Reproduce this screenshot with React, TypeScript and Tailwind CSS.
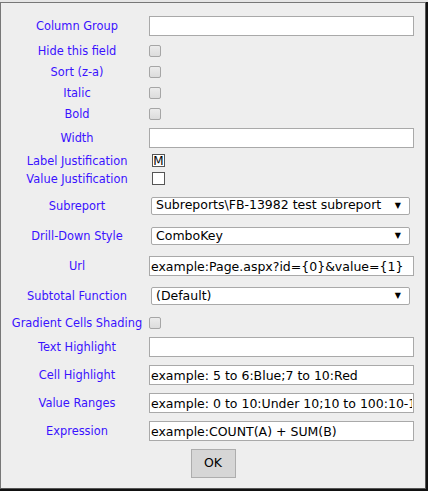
import React from "react";

const FONT = { fontFamily: '"DejaVu Sans", Verdana, sans-serif' };

function Label({ children }: { children: React.ReactNode }) {
  return (
    <div className="w-[144px] shrink-0 pt-[2px] text-center text-[11.4px] leading-none text-[#3a12ff] whitespace-nowrap">
      {children}
    </div>
  );
}

function TextBox({ value = "" }: { value?: string }) {
  return (
    <input
      readOnly
      defaultValue={value}
      className="w-[265px] h-[20px] border border-[#a9a9a9] bg-white px-[1px] text-[12.5px] text-black outline-none"
      style={FONT}
    />
  );
}

function DimBox() {
  return (
    <span className="block w-[12px] h-[12px] rounded-[2px] border border-[#a6a6a6] bg-gradient-to-b from-[#ececec] to-[#dcdcdc]" />
  );
}

function DropDown({ value }: { value: string }) {
  return (
    <div className="ml-[2px] w-[259px] h-[18px] flex items-center justify-between border border-[#a9a9a9] rounded-[2px] bg-white pl-[4px] pr-[8px]">
      <span className="text-[12.5px] text-black whitespace-nowrap">{value}</span>
      <span className="text-[8px] text-black">▼</span>
    </div>
  );
}

export default function App() {
  return (
    <div className="w-[428px] h-[491px] bg-[#111111]" style={FONT}>
      <div className="h-[2px] bg-[#e6e6e6]" />
      <div className="w-[426px] h-[487px] bg-[#eeeeee] border-t border-l border-[#777777] border-r border-r-[#555555] border-b border-b-[#555555] pl-[4px]">
        {/* Column Group */}
        <div className="mt-[13px] h-[20px] flex items-center">
          <Label>Column Group</Label>
          <TextBox />
        </div>
        {/* Boolean flags */}
        <div className="mt-[8px] h-[13px] flex items-center">
          <Label>Hide this field</Label>
          <DimBox />
        </div>
        <div className="mt-[8px] h-[13px] flex items-center">
          <Label>Sort (z-a)</Label>
          <DimBox />
        </div>
        <div className="mt-[8px] h-[13px] flex items-center">
          <Label>Italic</Label>
          <DimBox />
        </div>
        <div className="mt-[8px] h-[13px] flex items-center">
          <Label>Bold</Label>
          <DimBox />
        </div>
        <div className="mt-[8px] h-[20px] flex items-center">
          <Label>Width</Label>
          <TextBox />
        </div>
        {/* Justification */}
        <div className="mt-[6px] h-[13px] flex items-center">
          <Label>Label Justification</Label>
          <span className="ml-[3px] w-[13px] h-[13px] flex items-center justify-center border border-[#555555] bg-white text-[12px] leading-none text-black">
            M
          </span>
        </div>
        <div className="mt-[5px] h-[13px] flex items-center">
          <Label>Value Justification</Label>
          <span className="ml-[3px] w-[13px] h-[13px] border border-[#555555] bg-white" />
        </div>
        {/* Selects */}
        <div className="mt-[12px] h-[17px] flex items-center">
          <Label>Subreport</Label>
          <DropDown value="Subreports\FB-13982 test subreport" />
        </div>
        <div className="mt-[13px] h-[18px] flex items-center">
          <Label>Drill-Down Style</Label>
          <DropDown value="ComboKey" />
        </div>
        <div className="mt-[11px] h-[20px] flex items-center">
          <Label>Url</Label>
          <TextBox value="example:Page.aspx?id={0}&value={1}" />
        </div>
        <div className="mt-[11px] h-[18px] flex items-center">
          <Label>Subtotal Function</Label>
          <DropDown value="(Default)" />
        </div>
        <div className="mt-[12px] h-[12px] flex items-center">
          <Label>Gradient Cells Shading</Label>
          <DimBox />
        </div>
        {/* Highlights */}
        <div className="mt-[8px] h-[20px] flex items-center">
          <Label>Text Highlight</Label>
          <TextBox />
        </div>
        <div className="mt-[8px] h-[20px] flex items-center">
          <Label>Cell Highlight</Label>
          <TextBox value="example: 5 to 6:Blue;7 to 10:Red" />
        </div>
        <div className="mt-[8px] h-[20px] flex items-center">
          <Label>Value Ranges</Label>
          <TextBox value="example: 0 to 10:Under 10;10 to 100:10-100" />
        </div>
        <div className="mt-[8px] h-[20px] flex items-center">
          <Label>Expression</Label>
          <TextBox value="example:COUNT(A) + SUM(B)" />
        </div>
        <div className="mt-[8px] flex justify-center pr-[4px]">
          <button
            className="w-[45px] h-[29px] border border-[#adadad] bg-[#d6d6d6] text-[12.5px] text-black"
            style={FONT}
          >
            OK
          </button>
        </div>
      </div>
    </div>
  );
}
